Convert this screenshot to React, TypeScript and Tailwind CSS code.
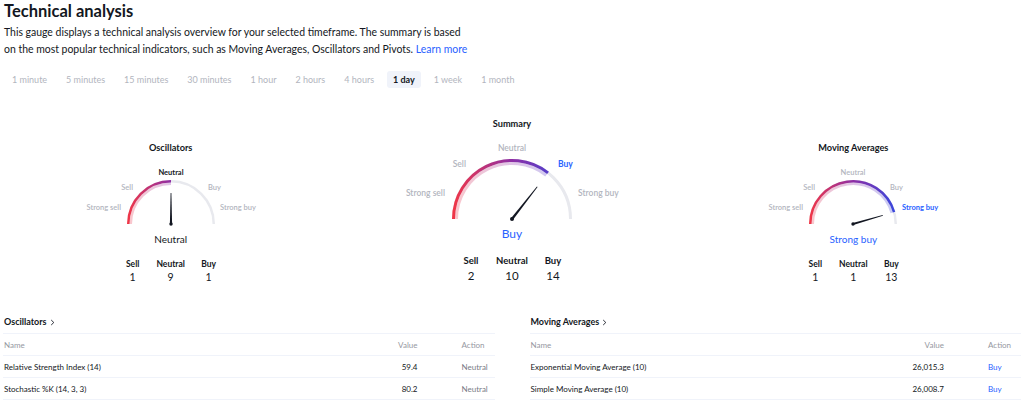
import React from 'react';

type Label = 'Strong sell' | 'Sell' | 'Neutral' | 'Buy' | 'Strong buy';

const DARK = '#131722';
const GRAY = '#b2b5be';
const BLUE = '#2962ff';

const timeframes = ['1 minute', '5 minutes', '15 minutes', '30 minutes', '1 hour', '2 hours', '4 hours', '1 day', '1 week', '1 month'];

interface GaugeProps {
  title: string;
  big?: boolean;
  angle: number;
  active: Label;
  result: string;
  resultColor: string;
  counts: [number, number, number];
}

const pt = (cx: number, cy: number, r: number, deg: number) => {
  const a = (deg * Math.PI) / 180;
  return [cx + r * Math.cos(a), cy - r * Math.sin(a)];
};

const arc = (cx: number, cy: number, r: number, to: number) => {
  const [x, y] = pt(cx, cy, r, to);
  return `M ${cx - r} ${cy} A ${r} ${r} 0 0 1 ${x} ${y}`;
};

const Gauge: React.FC<GaugeProps> = ({ title, big, angle, active, result, resultColor, counts }) => {
  const w = big ? 240 : 180;
  const h = big ? 86 : 66;
  const cx = w / 2;
  const cy = big ? 80 : 61;
  const outer = big ? 60 : 44;
  const band = big ? 3 : 2.5;
  const rSolid = outer - band / 2;
  const rLight = outer - band * 1.5;
  const fs = big ? 8.5 : 7.5;
  const needle = big ? 41 : 31;
  const id = title.replace(/\s/g, '');

  const labels: { t: Label; dx: number; dy: number; anchor: 'start' | 'middle' | 'end' }[] = big
    ? [
        { t: 'Strong sell', dx: -67, dy: -26, anchor: 'end' },
        { t: 'Sell', dx: -46, dy: -55, anchor: 'end' },
        { t: 'Neutral', dx: 0, dy: -71, anchor: 'middle' },
        { t: 'Buy', dx: 46, dy: -55, anchor: 'start' },
        { t: 'Strong buy', dx: 66, dy: -26, anchor: 'start' },
      ]
    : [
        { t: 'Strong sell', dx: -50, dy: -17, anchor: 'end' },
        { t: 'Sell', dx: -38, dy: -37, anchor: 'end' },
        { t: 'Neutral', dx: 0, dy: -52, anchor: 'middle' },
        { t: 'Buy', dx: 37, dy: -37, anchor: 'start' },
        { t: 'Strong buy', dx: 49, dy: -17, anchor: 'start' },
      ];

  const activeColor = active === 'Neutral' ? DARK : BLUE;
  const a = (angle * Math.PI) / 180;
  const [tx, ty] = [cx + needle * Math.cos(a), cy - needle * Math.sin(a)];
  const px = Math.sin(a);
  const py = Math.cos(a);
  const base = big ? 1.3 : 1.1;
  const nPoly = [
    [cx + px * base, cy + py * base],
    [tx + px * 0.4, ty + py * 0.4],
    [tx - px * 0.4, ty - py * 0.4],
    [cx - px * base, cy - py * base],
  ]
    .map((p) => p.join(','))
    .join(' ');

  const cw = big ? 'w-[41px]' : 'w-[38px]';

  return (
    <div className="flex flex-col items-center">
      <div className="text-[9.2px] leading-[14px] font-bold" style={{ color: DARK }}>
        {title}
      </div>
      <svg width={w} height={h} viewBox={`0 0 ${w} ${h}`} className="mt-[8px] block">
        <defs>
          <linearGradient id={`g-${id}`} gradientUnits="userSpaceOnUse" x1={cx - outer} y1="0" x2={cx + outer} y2="0">
            <stop offset="0" stopColor="#f23645" />
            <stop offset="0.5" stopColor="#8e2fa6" />
            <stop offset="1" stopColor="#3448e0" />
          </linearGradient>
        </defs>
        <path d={arc(cx, cy, rSolid, 0)} fill="none" stroke="#e8e9ee" strokeWidth={band} />
        <path d={arc(cx, cy, rSolid, angle)} fill="none" stroke={`url(#g-${id})`} strokeWidth={band} />
        <path d={arc(cx, cy, rLight, angle)} fill="none" stroke={`url(#g-${id})`} strokeOpacity={0.28} strokeWidth={band} />
        {labels.map((l) => (
          <text
            key={l.t}
            x={cx + l.dx}
            y={cy + l.dy + fs * 0.36}
            textAnchor={l.anchor}
            fontSize={fs}
            fontWeight={l.t === active ? 700 : 600}
            fill={l.t === active ? activeColor : GRAY}
            fontFamily="Lato, sans-serif"
          >
            {l.t}
          </text>
        ))}
        <polygon points={nPoly} fill={DARK} />
        <circle cx={cx} cy={cy} r={big ? 2 : 1.7} fill={DARK} />
      </svg>
      <div
        className={big ? 'text-[12px] leading-[18px]' : 'text-[10px] leading-[16px] mt-[2px]'}
        style={{ color: resultColor }}
      >
        {result}
      </div>
      <div className="flex mt-[11px]">
        {(['Sell', 'Neutral', 'Buy'] as const).map((k, i) => (
          <div key={k} className={`${cw} flex flex-col items-center`} style={{ color: DARK }}>
            <span className={big ? 'text-[9.5px] leading-[14px] font-bold' : 'text-[8.5px] leading-[12px] font-bold'}>{k}</span>
            <span className={big ? 'text-[11.5px] leading-[16px]' : 'text-[10.5px] leading-[14px]'}>{counts[i]}</span>
          </div>
        ))}
      </div>
    </div>
  );
};

interface Row {
  name: string;
  value: string;
  action: string;
}

const Table: React.FC<{ title: string; rows: Row[] }> = ({ title, rows }) => (
  <div>
    <div className="h-[22px] flex items-center gap-[3px] pl-[1px] text-[9px] font-bold" style={{ color: DARK }}>
      {title}
      <svg width="5" height="7" viewBox="0 0 5 7" className="mt-[1px]">
        <path d="M1.2 1 L3.8 3.5 L1.2 6" fill="none" stroke={DARK} strokeWidth="0.9" />
      </svg>
    </div>
    <div className="h-[23px] flex items-center border-t border-b border-[#f0f3fa] text-[8px] text-[#9598a1]">
      <div className="flex-1 pl-[1px]">Name</div>
      <div className="text-right">Value</div>
      <div className="w-[77px] pl-[44px]">Action</div>
    </div>
    {rows.map((r) => (
      <div key={r.name} className="h-[22px] flex items-center border-b border-[#f0f3fa] text-[8px]" style={{ color: DARK }}>
        <div className="flex-1 pl-[1px]">{r.name}</div>
        <div className="text-right">{r.value}</div>
        <div className={`w-[77px] pl-[44px] ${r.action === 'Buy' ? 'text-[#2962ff]' : 'text-[#787b86]'}`}>{r.action}</div>
      </div>
    ))}
  </div>
);

export default function App() {
  return (
    <div className="w-[1024px] h-[401px] overflow-hidden bg-white [font-family:Lato,sans-serif]" style={{ color: DARK }}>
      <div className="px-[4px]">
        <h1 className="text-[16.5px] leading-[23px] font-bold">Technical analysis</h1>
        <p className="text-[10.45px] leading-[17px] mt-[1px]">
          This gauge displays a technical analysis overview for your selected timeframe. The summary is based
          <br />
          on the most popular technical indicators, such as Moving Averages, Oscillators and Pivots.{' '}
          <span className="text-[#2962ff]">Learn more</span>
        </p>
        <div className="flex gap-[7px] mt-[13px] ml-[2px]">
          {timeframes.map((t) => (
            <div
              key={t}
              className={`h-[17px] px-[6px] flex items-center rounded-[3px] text-[9px] ${
                t === '1 day' ? 'bg-[#f0f3fa] font-bold text-[#131722]' : 'text-[#b2b5be]'
              }`}
            >
              {t}
            </div>
          ))}
        </div>
      </div>
      <div className="grid grid-cols-3 items-end mt-[29px]">
        <Gauge title="Oscillators" angle={90} active="Neutral" result="Neutral" resultColor={DARK} counts={[1, 9, 1]} />
        <Gauge title="Summary" big angle={52} active="Buy" result="Buy" resultColor={BLUE} counts={[2, 10, 14]} />
        <Gauge title="Moving Averages" angle={16} active="Strong buy" result="Strong buy" resultColor={BLUE} counts={[1, 1, 13]} />
      </div>
      <div className="grid grid-cols-2 gap-[35px] px-[3px] mt-[27px]">
        <Table
          title="Oscillators"
          rows={[
            { name: 'Relative Strength Index (14)', value: '59.4', action: 'Neutral' },
            { name: 'Stochastic %K (14, 3, 3)', value: '80.2', action: 'Neutral' },
          ]}
        />
        <Table
          title="Moving Averages"
          rows={[
            { name: 'Exponential Moving Average (10)', value: '26,015.3', action: 'Buy' },
            { name: 'Simple Moving Average (10)', value: '26,008.7', action: 'Buy' },
          ]}
        />
      </div>
    </div>
  );
}
